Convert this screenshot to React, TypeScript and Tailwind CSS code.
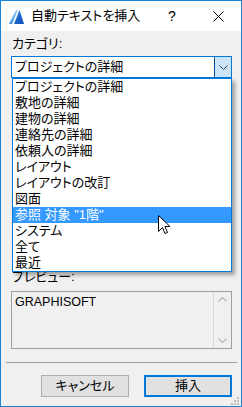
const items = [
  "プロジェクトの詳細",
  "敷地の詳細",
  "建物の詳細",
  "連絡先の詳細",
  "依頼人の詳細",
  "レイアウト",
  "レイアウトの改訂",
  "図面",
  "参照 対象 \"1階\"",
  "システム",
  "全て",
  "最近",
];

function AppIcon() {
  return (
    <svg width="15" height="15" viewBox="0 0 15 15">
      <defs>
        <linearGradient id="ga" x1="0" y1="0" x2="0" y2="1">
          <stop offset="0" stopColor="#9fd0ff" />
          <stop offset="1" stopColor="#3a8fe6" />
        </linearGradient>
        <linearGradient id="gb" x1="0" y1="0" x2="1" y2="1">
          <stop offset="0" stopColor="#2f7fe0" />
          <stop offset="1" stopColor="#0a4fb8" />
        </linearGradient>
      </defs>
      <polygon points="0,15 7,1 9,1 3,15" fill="url(#ga)" />
      <polygon points="5,15 10.5,1 15,15" fill="url(#gb)" />
    </svg>
  );
}

export default function App() {
  return (
    <div className="w-[242px] h-[407px] border border-[#1883d7] bg-[#f0f0f0] flex flex-col text-black text-[13px] font-['Liberation_Sans','Noto_Sans_CJK_JP',sans-serif] [font-feature-settings:'palt'] overflow-hidden">
      {/* title bar */}
      <div className="h-[30px] bg-white flex items-center shrink-0">
        <div className="pl-[8px] pt-[1px]">
          <AppIcon />
        </div>
        <span className="ml-[7px] text-[13px]">自動テキストを挿入</span>
        <div className="ml-auto flex h-full">
          <div className="w-[46px] flex items-center justify-center text-[14px]">?</div>
          <div className="w-[46px] flex items-center justify-center">
            <svg width="11" height="11" viewBox="0 0 11 11">
              <path d="M0.5 0.5 L10.5 10.5 M10.5 0.5 L0.5 10.5" stroke="#000" strokeWidth="1" />
            </svg>
          </div>
        </div>
      </div>

      {/* body */}
      <div className="relative flex-1 flex flex-col pl-[10px] pr-[9px] pt-[5px]">
        <div className="h-[16px] leading-[16px] pl-[1px]">カテゴリ:</div>

        <div className="mt-[4px] h-[22px] border border-[#0078d7] bg-white flex items-center">
          <span className="pl-[3px] flex-1">プロジェクトの詳細</span>
          <div className="w-[17px] h-full bg-[#cce4f7] border-l border-[#005499] flex items-center justify-center">
            <svg width="9" height="5" viewBox="0 0 9 5">
              <path d="M0.5 0.5 L4.5 4.5 L8.5 0.5" fill="none" stroke="#404040" strokeWidth="1" />
            </svg>
          </div>
        </div>

        <div className="mt-[191px] h-[16px] leading-[16px] pl-[1px]">プレビュー:</div>

        <div className="mt-[6px] h-[58px] border border-[#a0a0a0] flex">
          <div className="flex-1 pl-[3px] pt-[2px] text-[12.5px] leading-[16px] text-[#000]">GRAPHISOFT</div>
          <div className="w-[18px] border-l border-[#dadada] flex flex-col items-center justify-between py-[5px]">
            <svg width="9" height="5" viewBox="0 0 9 5">
              <path d="M0.5 4.5 L4.5 0.5 L8.5 4.5" fill="none" stroke="#bfbfbf" strokeWidth="1.6" />
            </svg>
            <svg width="9" height="5" viewBox="0 0 9 5">
              <path d="M0.5 0.5 L4.5 4.5 L8.5 0.5" fill="none" stroke="#bfbfbf" strokeWidth="1.6" />
            </svg>
          </div>
        </div>

        <div className="mt-[13px] h-px bg-[#a0a0a0] -mx-[5px]" />

        <div className="mt-[12px] flex justify-end gap-[15px]">
          <div className="w-[88px] h-[22px] bg-[#e1e1e1] border border-[#adadad] flex items-center justify-center">
            キャンセル
          </div>
          <div className="w-[88px] h-[22px] bg-[#e1e1e1] border-2 border-[#0078d7] flex items-center justify-center">
            挿入
          </div>
        </div>

        {/* size grip */}
        <svg className="absolute right-[2px] bottom-[1px]" width="9" height="9" viewBox="0 0 9 9">
          <rect x="7" y="1" width="2" height="2" fill="#bcbcbc" />
          <rect x="4" y="4" width="2" height="2" fill="#bcbcbc" />
          <rect x="7" y="4" width="2" height="2" fill="#bcbcbc" />
          <rect x="1" y="7" width="2" height="2" fill="#bcbcbc" />
          <rect x="4" y="7" width="2" height="2" fill="#bcbcbc" />
          <rect x="7" y="7" width="2" height="2" fill="#bcbcbc" />
        </svg>

        {/* open dropdown list */}
        <div className="absolute left-[11px] top-[47px] w-[220px] h-[194px] bg-white border border-[#0078d7] shadow-[3px_3px_4px_rgba(0,0,0,0.35)]">
          {items.map((it, i) => (
            <div
              key={it}
              className={
                i === 8
                  ? "h-[16px] leading-[16px] pl-[2px] bg-[#3399ff] text-white whitespace-nowrap"
                  : "h-[16px] leading-[16px] pl-[2px] whitespace-nowrap"
              }
            >
              {it}
            </div>
          ))}
        </div>

        {/* mouse pointer */}
        <svg className="absolute left-[157px] top-[184px]" width="13" height="21" viewBox="0 0 13 21">
          <path
            d="M0.5 0.5 L0.5 16.5 L4.5 12.5 L7 18.5 L9.5 17.5 L7 11.5 L12 11.5 Z"
            fill="#fff"
            stroke="#000"
            strokeWidth="1"
            strokeLinejoin="miter"
          />
        </svg>
      </div>
    </div>
  );
}
